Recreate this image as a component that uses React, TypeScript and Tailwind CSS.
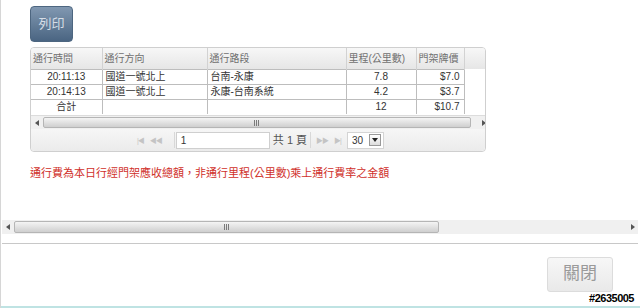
import type { ReactNode } from 'react';

const FONT = { fontFamily: '"Liberation Sans", "Noto Sans CJK TC", sans-serif' };

interface Row {
  readonly time: string;
  readonly direction: string;
  readonly road: string;
  readonly km: string;
  readonly price: string;
}

const ROWS: ReadonlyArray<Row> = [
  { time: '20:11:13', direction: '國道一號北上', road: '台南-永康', km: '7.8', price: '$7.0' },
  { time: '20:14:13', direction: '國道一號北上', road: '永康-台南系統', km: '4.2', price: '$3.7' },
  { time: '合計', direction: '', road: '', km: '12', price: '$10.7' },
];

const HEADERS = ['通行時間', '通行方向', '通行路段', '里程(公里數)', '門架牌價'];
const WIDTHS = ['w-[71px]', 'w-[105px]', 'w-[139px]', 'w-[70px]', 'w-[48px]'];

function ArrowLeft() {
  return (
    <svg width="4" height="6" viewBox="0 0 4 6" className="fill-[#555]">
      <path d="M4 0 L0 3 L4 6 Z" />
    </svg>
  );
}

function ArrowRight() {
  return (
    <svg width="4" height="6" viewBox="0 0 4 6" className="fill-[#555]">
      <path d="M0 0 L4 3 L0 6 Z" />
    </svg>
  );
}

function Grip() {
  return (
    <svg width="6" height="6" viewBox="0 0 6 6" className="stroke-[#7a7a7a]">
      <path d="M0.5 0 V6 M2.5 0 V6 M4.5 0 V6" strokeWidth="1" />
    </svg>
  );
}

function ScrollBar({ thumb, className }: { readonly thumb: string; readonly className?: string }) {
  return (
    <div className={`flex h-[14px] items-stretch bg-[#f0f0f0] ${className ?? ''}`}>
      <div className="flex w-[12px] shrink-0 items-center justify-center">
        <ArrowLeft />
      </div>
      <div className="flex flex-1 items-stretch py-px pr-2">
        <div
          className={`flex ${thumb} items-center justify-center rounded-[2px] border border-[#b5b5b5] bg-gradient-to-b from-[#f4f4f4] to-[#cfcfcf]`}
        >
          <Grip />
        </div>
      </div>
      <div className="flex w-[10px] shrink-0 items-center justify-center">
        <ArrowRight />
      </div>
    </div>
  );
}

function PagerIcon({ children }: { readonly children: ReactNode }) {
  return <span className="text-[7px] leading-none tracking-[-1px] text-[#c4c4c4]">{children}</span>;
}

function Pager() {
  return (
    <div className="flex h-[22px] items-center rounded-b-[4px] bg-gradient-to-b from-[#f6f6f6] to-[#ebebeb] pl-[106px]">
      <div className="flex items-center gap-[6px]">
        <PagerIcon>|◀</PagerIcon>
        <PagerIcon>◀◀</PagerIcon>
      </div>
      <span className="ml-[12px] h-[16px] w-px bg-[#d8d8d8]" />
      <div className="ml-px flex h-[17px] w-[94px] items-center border border-[#cfcfcf] bg-white px-[4px] text-[10px] text-[#333]">1</div>
      <span className="ml-[3px] text-[11px] text-[#555]">共 1 頁</span>
      <span className="ml-[3px] h-[16px] w-px bg-[#d8d8d8]" />
      <div className="ml-[5px] flex items-center gap-[6px]">
        <PagerIcon>▶▶</PagerIcon>
        <PagerIcon>▶|</PagerIcon>
      </div>
      <div className="ml-[6px] flex h-[17px] w-[37px] items-center justify-between border border-[#d4d4d4] bg-white pl-[4px] pr-[2px] text-[10px] text-[#333]">
        <span>30</span>
        <span className="flex h-[12px] w-[12px] items-center justify-center border border-[#999] bg-gradient-to-b from-white to-[#ddd]">
          <svg width="6" height="4" viewBox="0 0 6 4" className="fill-[#222]">
            <path d="M0 0 L6 0 L3 4 Z" />
          </svg>
        </span>
      </div>
    </div>
  );
}

function Grid() {
  return (
    <div className="w-[456px] overflow-hidden rounded-[4px] border border-[#cfcfcf] bg-white">
      <table className="w-full table-fixed border-collapse text-[10px]">
        <thead>
          <tr className="h-[21px] bg-gradient-to-b from-[#f7f7f7] to-[#e6e6e6]">
            {HEADERS.map((h, i) => (
              <th
                key={h}
                className={`${WIDTHS[i]} overflow-hidden whitespace-nowrap border-r border-[#d2d2d2] px-[2px] text-left font-normal text-[#707070]`}
              >
                {h}
              </th>
            ))}
            <th />
          </tr>
        </thead>
        <tbody className="text-[#333]">
          {ROWS.map((r) => (
            <tr key={r.time} className="h-[15px] leading-[14px]">
              <td className="border-t border-r border-[#bdbdbd] text-center">{r.time}</td>
              <td className="border-t border-r border-[#bdbdbd] px-[3px]">{r.direction}</td>
              <td className="border-t border-r border-[#bdbdbd] px-[3px]">{r.road}</td>
              <td className="border-t border-r border-[#bdbdbd] text-center">{r.km}</td>
              <td className="border-t border-r border-[#bdbdbd] pr-[4px] text-right">{r.price}</td>
              <td />
            </tr>
          ))}
        </tbody>
      </table>
      <ScrollBar thumb="w-[428px]" className="mt-px border-t border-[#dcdcdc]" />
      <Pager />
    </div>
  );
}

export default function App() {
  return (
    <div style={FONT} className="relative flex h-[308px] w-[640px] flex-col overflow-hidden border-l border-[#d6d6d6] bg-white">
      <div className="flex flex-col pl-[29px] pt-[6px]">
        <button
          type="button"
          className="h-[36px] w-[43px] rounded-[4px] border border-[#4d6680] bg-gradient-to-b from-[#8198b1] to-[#4a6582] text-[13px] text-[#d5dde6]"
        >
          列印
        </button>
        <div className="mt-[5px]">
          <Grid />
        </div>
        <p className="mt-[13px] text-[11px] text-[#d0302a]">通行費為本日行經門架應收總額，非通行里程(公里數)乘上通行費率之金額</p>
      </div>

      <div className="mt-[38px] pl-[1px] pr-[2px]">
        <ScrollBar thumb="w-[425px]" />
        <div className="mt-[9px] h-px bg-[#c8c8c8]" />
      </div>

      <div className="flex justify-end pr-[27px] pt-[13px]">
        <button
          type="button"
          className="h-[35px] w-[66px] rounded-[3px] border border-[#dcdcdc] bg-gradient-to-b from-[#f7f7f7] to-[#e9e9e9] text-[17px] text-[#9a9a9a]"
        >
          關閉
        </button>
      </div>

      <span className="absolute bottom-[4px] right-[6px] text-[11px] font-bold leading-none tracking-[-0.5px] text-black">#2635005</span>
      <div className="absolute bottom-0 left-0 right-0 h-[2px] bg-[#bfe3e3]" />
    </div>
  );
}
